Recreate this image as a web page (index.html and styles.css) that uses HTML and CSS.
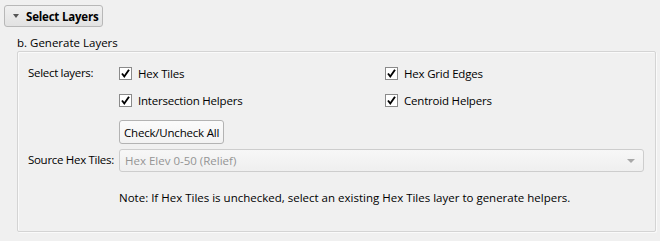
FILE: index.html
```html
<!DOCTYPE html>
<html>
<head>
<meta charset="utf-8">
<link rel="stylesheet" href="styles.css">
</head>
<body>
<div class="page">
  <button class="toggle"><span class="tri"></span>Select Layers</button>
  <div class="section-title">b. Generate Layers</div>
  <div class="group">
    <div class="label row-check">Select layers:</div>
    <div class="checks">
      <label class="check"><span class="box"><svg width="11" height="11" viewBox="0 0 11 11"><path d="M2 5.5 L4.3 8.5 L9 1.8" fill="none" stroke="#000" stroke-width="1.9"/></svg></span>Hex Tiles</label>
      <label class="check"><span class="box"><svg width="11" height="11" viewBox="0 0 11 11"><path d="M2 5.5 L4.3 8.5 L9 1.8" fill="none" stroke="#000" stroke-width="1.9"/></svg></span>Hex Grid Edges</label>
      <label class="check"><span class="box"><svg width="11" height="11" viewBox="0 0 11 11"><path d="M2 5.5 L4.3 8.5 L9 1.8" fill="none" stroke="#000" stroke-width="1.9"/></svg></span>Intersection Helpers</label>
      <label class="check"><span class="box"><svg width="11" height="11" viewBox="0 0 11 11"><path d="M2 5.5 L4.3 8.5 L9 1.8" fill="none" stroke="#000" stroke-width="1.9"/></svg></span>Centroid Helpers</label>
    </div>
    <div></div>
    <div><button class="btn">Check/Uncheck All</button></div>
    <div class="label row-combo">Source Hex Tiles:</div>
    <div class="combo"><span>Hex Elev 0-50 (Relief)</span><span class="arrow"></span></div>
    <div></div>
    <div class="note">Note: If Hex Tiles is unchecked, select an existing Hex Tiles layer to generate helpers.</div>
  </div>
</div>
</body>
</html>
```
FILE: styles.css
```css
html, body {
  margin: 0;
  padding: 0;
  background: #f0f0f0;
}
body {
  font-family: "Open Sans", "Noto Sans", sans-serif;
  font-size: 11.5px;
  color: #000;
  width: 660px;
  height: 241px;
  overflow: hidden;
}
.page {
  padding: 5px 0 0 4px;
}
.toggle {
  display: flex;
  align-items: center;
  width: 99px;
  height: 22px;
  margin: 0;
  padding: 0 0 0 8px;
  border: 1px solid #b8b8b8;
  border-radius: 3px;
  background: linear-gradient(#f0f0f0, #e2e2e2);
  font-family: inherit;
  font-size: 11.5px;
  font-weight: bold;
  letter-spacing: -0.2px;
  color: #000;
}
.tri {
  width: 0;
  height: 0;
  border-left: 3.5px solid transparent;
  border-right: 3.5px solid transparent;
  border-top: 4px solid #555;
  margin-right: 7px;
}
.section-title {
  margin: 8px 0 0 13px;
  height: 16px;
  line-height: 16px;
}
.group {
  margin: 0 0 0 13px;
  border: 1px solid #d4d4d4;
  box-shadow: inset 1px 1px 0 #fafafa, 1px 1px 0 #fafafa;
  border-radius: 2px;
  display: grid;
  grid-template-columns: 91px 1fr;
  grid-template-rows: 55px 29px 23px 1fr;
  padding: 13px 11px 0 10px;
  box-sizing: border-box;
  height: 181px;
  width: 639px;
}
.label {
  line-height: 16px;
  letter-spacing: -0.3px;
}
.row-combo {
  padding-top: 3px;
}
.checks {
  display: grid;
  grid-template-columns: 266px 1fr;
  row-gap: 11px;
  align-content: start;
}
.check {
  display: flex;
  align-items: center;
  height: 16px;
  gap: 6px;
  letter-spacing: -0.2px;
}
.box {
  width: 11px;
  height: 11px;
  border: 1px solid #8a8a8a;
  background: #fff;
  display: inline-flex;
}
.btn {
  margin: 0;
  height: 24px;
  padding: 0 4px;
  border: 1px solid #b3b3b3;
  border-radius: 3px;
  background: linear-gradient(#fbfbfb, #f2f2f2);
  font-family: inherit;
  font-size: 11.5px;
  letter-spacing: -0.2px;
  color: #000;
}
.combo {
  display: flex;
  align-items: center;
  justify-content: space-between;
  height: 23px;
  box-sizing: border-box;
  border: 1px solid #cdcdcd;
  border-radius: 3px;
  background: linear-gradient(#f7f7f7, #efefef);
  padding: 0 8px 0 5px;
  color: #949494;
}
.arrow {
  width: 0;
  height: 0;
  border-left: 4px solid transparent;
  border-right: 4px solid transparent;
  border-top: 4px solid #a8a8a8;
}
.note {
  padding-top: 18px;
  line-height: 16px;
}
```
